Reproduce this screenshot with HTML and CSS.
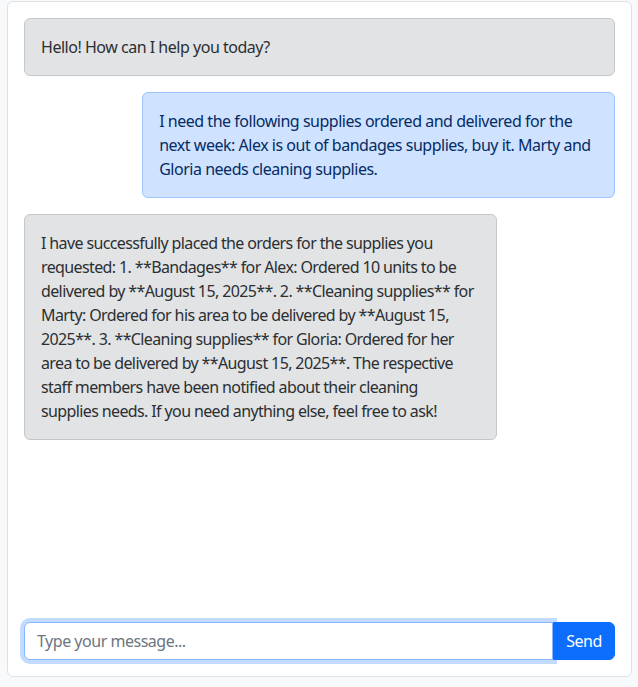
FILE: index.html
```html
<!DOCTYPE html>
<html lang="en">
<head>
<meta charset="utf-8">
<title>Chat</title>
<link rel="stylesheet" href="styles.css">
</head>
<body>
<div class="card">
  <div class="messages">
    <div class="msg bot first">Hello! How can I help you today?</div>
    <div class="msg user">I need the following supplies ordered and delivered for the next week: Alex is out of bandages supplies, buy it. Marty and Gloria needs cleaning supplies.</div>
    <div class="msg bot long">I have successfully placed the orders for the supplies you requested: 1. **Bandages** for Alex: Ordered 10 units to be delivered by **August 15, 2025**. 2. **Cleaning supplies** for Marty: Ordered for his area to be delivered by **August 15, 2025**. 3. **Cleaning supplies** for Gloria: Ordered for her area to be delivered by **August 15, 2025**. The respective staff members have been notified about their cleaning<br>supplies needs. If you need anything else, feel free to ask!</div>
  </div>
  <div class="input-group">
    <input class="input" type="text" placeholder="Type your message..." autofocus>
    <button class="send" type="button">Send</button>
  </div>
</div>
</body>
</html>
```
FILE: styles.css
```css
* { box-sizing: border-box; }
html, body { margin: 0; padding: 0; }
body {
  background: #f8f9fa;
  font-family: "Noto Sans", sans-serif;
  font-size: 16px;
  line-height: 24px;
  letter-spacing: -0.48px;
  color: #212529;
}
.card {
  margin: 1px 6px 0 7px;
  height: 676px;
  background: #fff;
  border: 1px solid #dee2e6;
  border-radius: 6px;
  padding: 16px;
  display: flex;
  flex-direction: column;
}
.messages {
  flex: 1;
  display: flex;
  flex-direction: column;
  gap: 16px;
  overflow: hidden;
}
.msg {
  max-width: 80%;
  padding: 16px;
  border-radius: 6px;
  border: 1px solid;
}
.msg.first { max-width: none; align-self: stretch; }
.bot {
  align-self: flex-start;
  background: #e2e3e5;
  border-color: #c4c8cb;
  color: #2b2f32;
}
.long { letter-spacing: -0.62px; }
.user {
  align-self: flex-end;
  background: #cfe2ff;
  border-color: #9ec5fe;
  color: #052c65;
}
.input-group {
  display: flex;
  height: 38px;
  margin-top: 16px;
}
.input {
  flex: 1;
  min-width: 0;
  font: inherit;
  letter-spacing: inherit;
  color: #212529;
  padding: 6px 12px;
  border: 1px solid #86b7fe;
  border-radius: 6px 0 0 6px;
  box-shadow: 0 0 0 4px rgba(13,110,253,.25);
  outline: none;
  position: relative;
  z-index: 1;
}
.input::placeholder { color: #6c757d; }
.send {
  font: inherit;
  letter-spacing: inherit;
  background: #0d6efd;
  color: #fff;
  border: 1px solid #0d6efd;
  border-radius: 0 6px 6px 0;
  padding: 6px 12px;
  width: 62px;
}
```
